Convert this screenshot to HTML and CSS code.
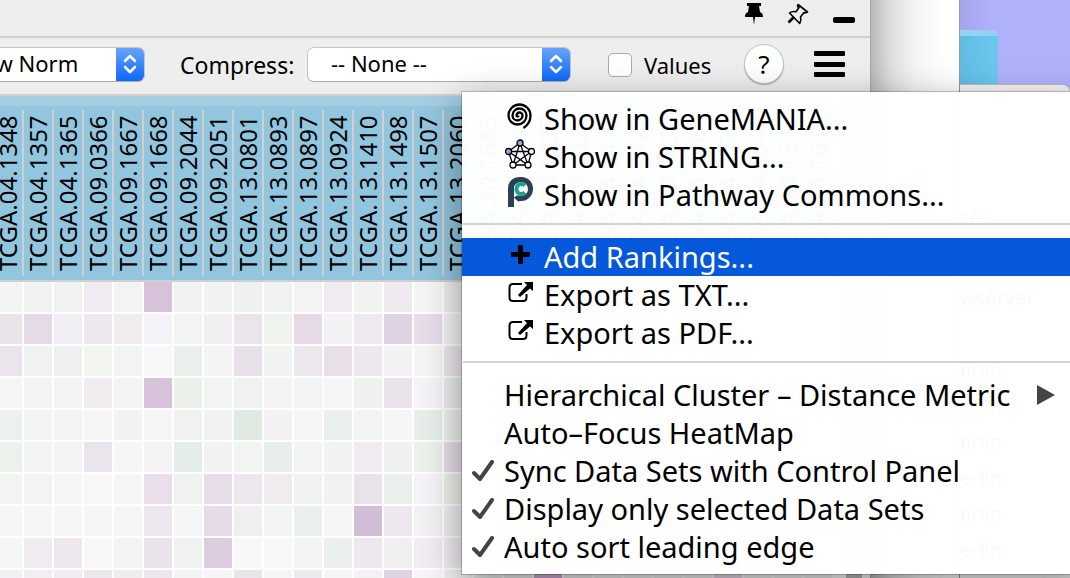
FILE: index.html
```html
<!DOCTYPE html>
<html lang="en">
<head>
<meta charset="utf-8">
<title>HeatMap</title>
<link rel="stylesheet" href="styles.css">
</head>
<body>
<div class="screen">
  <main class="panel">
    <header class="titlebar">
      <button class="icon-btn" aria-label="Pin"><svg width="18" height="22" viewBox="0 0 18 22"><path d="M2 0h14v3h-2l1 6c2 1 3 2 3 5h-8l-1 8-1-8H0c0-3 1-4 3-5l1-6H2z"/></svg></button>
      <button class="icon-btn" aria-label="Float"><svg width="22" height="22" viewBox="0 0 22 22" fill="none" stroke="#000" stroke-width="1.6" stroke-linejoin="round"><path d="M11 1.500l9.500 7.500-2.500 1-1-.5-3.500 4.500c.8 2.500.5 4.500-.8 6.500L2.500 10c2-1.600 4.200-1.800 6.500-1.200l3-4.300-1.500-1z"/><path d="M7 14l-5.500 5.500" stroke-width="2.600"/></svg></button>
      <button class="icon-btn" aria-label="Minimize"><svg width="22" height="22" viewBox="0 0 22 22"><rect y="14" width="22" height="6" rx="2"/></svg></button>
    </header>
    <div class="toolbar">
      <span class="drop drop-norm">
        <select aria-label="Normalization"><option>Row Norm</option></select>
        <svg class="chevrons" width="14" height="22" viewBox="0 0 14 22"><path d="M2 8l5-5 5 5M2 14l5 5 5-5"/></svg>
      </span>
      <label class="compress" for="compress">Compress:</label>
      <span class="drop drop-compress">
        <select id="compress"><option>-- None --</option></select>
        <svg class="chevrons" width="14" height="22" viewBox="0 0 14 22"><path d="M2 8l5-5 5 5M2 14l5 5 5-5"/></svg>
      </span>
      <label class="values"><input type="checkbox">Values</label>
      <div class="tools">
        <button class="help" aria-label="Help">?</button>
        <button class="icon-btn" aria-label="Options"><svg width="31" height="26" viewBox="0 0 31 26"><rect width="31" height="5" rx="1"/><rect y="11" width="31" height="5" rx="1"/><rect y="21" width="31" height="5" rx="1"/></svg></button>
      </div>
    </div>
    <div class="heat-area">
      <table class="heat"><thead><tr id="samples"></tr></thead><tbody id="cells"></tbody></table>
      <div class="track"></div>
    </div>
  </main>
  <div class="window-behind"></div>
  <aside class="desktop">
    <div class="folder"></div>
    <div class="finder">
      <span class="host first">ser</span>
      <span class="host second">wserver</span>
      <span class="host third">erlin</span>
      <span class="host">erlin</span><span class="host">erlin</span><span class="host">erlin</span><span class="host">erlin</span><span class="host">erlin</span>
    </div>
  </aside>

  <div class="menu" role="menu">
    <button class="item" role="menuitem"><span class="icon"><svg width="26" height="27" viewBox="0 0 26 27" fill="none" stroke="#000" stroke-width="2.300"><path d="M11.500 12.500a1 1 0 0 1-2 0a3 3 0 0 1 6 0a5 5 0 0 1-10 0a7 7 0 0 1 14 0a9 9 0 0 1-18 0a11 11 0 0 1 22 0c0 5.500-2.500 9.500-7 12.500"/></svg></span>Show in GeneMANIA...</button>
    <button class="item" role="menuitem"><span class="icon"><svg width="30" height="30" viewBox="0 0 30 30" fill="#fff" stroke="#000" stroke-width="1.300"><path fill="none" d="M15 4L3.500 12.500 8 26h15l3.500-13.500zM15 4L8 26l18.500-13.500h-23L23 26z"/><circle cx="15" cy="4" r="3" fill="#a0a4d8"/><circle cx="3.500" cy="12.500" r="3" fill="#a0a4d8"/><circle cx="26.500" cy="12.500" r="3"/><circle cx="8" cy="26" r="3"/><circle cx="23" cy="26" r="3"/></svg></span>Show in STRING...</button>
    <button class="item" role="menuitem"><span class="icon"><svg width="25" height="30" viewBox="0 0 25 30" fill="none"><path d="M3 30V11.500C3 6 6.500 3 12 3h1.500c5 0 8.500 4 8.500 9s-4 9-9 9c-2 0-3.500 0-5 1.500" stroke="#2d4055" stroke-width="6"/><circle cx="13" cy="12" r="7" fill="#fff"/><path d="M17 8.500a5 5 0 1 0 0 7" stroke="#17a689" stroke-width="4"/></svg></span>Show in Pathway Commons...</button>
    <hr>
    <button class="item active" role="menuitem"><span class="icon"><svg width="19" height="19" viewBox="0 0 19 19"><path d="M7 1q0-1 1-1h3q1 0 1 1v6h6q1 0 1 1v3q0 1-1 1h-6v6q0 1-1 1H8q-1 0-1-1v-6H1q-1 0-1-1V8q0-1 1-1h6z"/></svg></span>Add Rankings...</button>
    <button class="item" role="menuitem"><span class="icon"><svg width="25" height="22" viewBox="0 0 25 22"><path d="M14 3H5Q1.500 3 1.500 6.500v10Q1.500 20 5 20h10q3.500 0 3.500-3.500V13" fill="none" stroke="#000" stroke-width="2"/><path d="M16 1h9v9l-3-2.500-10 8.500-2-2L19 4z"/></svg></span>Export as TXT...</button>
    <button class="item" role="menuitem"><span class="icon"><svg width="25" height="22" viewBox="0 0 25 22"><path d="M14 3H5Q1.500 3 1.500 6.500v10Q1.500 20 5 20h10q3.500 0 3.500-3.500V13" fill="none" stroke="#000" stroke-width="2"/><path d="M16 1h9v9l-3-2.500-10 8.500-2-2L19 4z"/></svg></span>Export as PDF...</button>
    <hr>
    <button class="item" role="menuitem" aria-haspopup="true"><span class="check"></span>Hierarchical Cluster – Distance Metric<svg class="more" width="18" height="20" viewBox="0 0 18 20"><path d="M0 0l18 10L0 20z" fill="#444"/></svg></button>
    <button class="item" role="menuitem"><span class="check"></span>Auto–Focus HeatMap</button>
    <button class="item" role="menuitemcheckbox" aria-checked="true"><span class="check"><svg width="22" height="22" viewBox="0 0 22 22"><path d="M2 13l6 6L20 2"/></svg></span>Sync Data Sets with Control Panel</button>
    <button class="item" role="menuitemcheckbox" aria-checked="true"><span class="check"><svg width="22" height="22" viewBox="0 0 22 22"><path d="M2 13l6 6L20 2"/></svg></span>Display only selected Data Sets</button>
    <button class="item" role="menuitemcheckbox" aria-checked="true"><span class="check"><svg width="22" height="22" viewBox="0 0 22 22"><path d="M2 13l6 6L20 2"/></svg></span>Auto sort leading edge</button>
  </div>
</div>
<script src="heat.js"></script>
</body>
</html>
```
FILE: styles.css
```css
* { box-sizing: border-box; }
body { margin: 0; font-family: "Noto Sans", "Open Sans", sans-serif; font-size: 22px; color: #000; }
button, select { font: inherit; color: inherit; }
svg { display: block; flex: none; }
.screen { position: relative; display: flex; height: 100vh; overflow: hidden; background: #fff; }

.panel { flex: 1; min-width: 0; overflow: hidden; background: #eee; border-right: 1px solid #a6a6a6; }
.titlebar { display: flex; justify-content: flex-end; align-items: center; gap: 24px; height: 38px; padding: 0 15px 8px 0; border-bottom: 2px solid #d0d0d0; }
.icon-btn { padding: 0; border: 0; background: none; }
.toolbar { display: flex; align-items: center; height: 58px; padding-bottom: 4px; border-bottom: 2px solid #d0d0d0; }
.drop { position: relative; flex: none; display: flex; }
.drop select {
  appearance: none; width: 100%; height: 35px; padding: 0 32px 2px 23px; border: 1px solid #c4c4c4; border-bottom-color: #aaa; border-radius: 7px;
  background: linear-gradient(#6ba5fb, #0a66fd) right / 29px 100% no-repeat border-box #fff;
}
.drop-norm { width: 206px; margin-left: -61px; }
.drop-norm select { padding-left: 29px; }
.drop-compress { width: 264px; margin-left: 10px; }
.chevrons { position: absolute; right: 8px; top: 6px; fill: none; stroke: #fff; stroke-width: 2.500; stroke-linecap: round; stroke-linejoin: round; pointer-events: none; }
.compress { flex: none; width: 117px; margin-left: 35px; padding-top: 2px; font-size: 23px; white-space: nowrap; }
.values { display: flex; align-items: center; gap: 12px; margin-left: 37px; padding-top: 2px; }
.values input { appearance: none; width: 24px; height: 24px; margin: 0; border: 1px solid #aaa; border-radius: 5px; background: #fff; }
.tools { display: flex; align-items: center; gap: 30px; margin-left: auto; padding-right: 25px; }
.help { width: 40px; height: 40px; padding: 0; border: 1px solid #c4c4c4; border-radius: 50%; background: #fff; font-size: 26px; line-height: 36px; box-shadow: 0 1px 1px #aaa; }

.heat-area { display: flex; justify-content: space-between; background: #fff; }
.heat { flex: none; border-spacing: 0; table-layout: fixed; margin-left: -8px; }
.heat th { width: 30px; height: 186px; padding: 14px 0 4px; border-bottom: 2px solid #d0d0d0; background: linear-gradient(#a5cde2 10px, #92c5de 10px); font-size: 24px; font-weight: 400; vertical-align: bottom; }
.heat th span { display: block; width: 30px; height: 166px; border-right: 2px solid #d0d0d0; line-height: 28px; writing-mode: vertical-rl; transform: rotate(180deg); }
.heat td { width: 30px; height: 32px; padding: 0 0 2px 2px; }
.swatch { display: block; height: 30px; }
.track { width: 24px; border-right: 8px solid #fafafa; background: #bbb; }

.window-behind { width: 89px; border-right: 1px solid #999; background: linear-gradient(90deg, #b9b9b9, #dedede 20px, #f5f5f5 45px, #fff 75px); }
.desktop { display: flex; flex-direction: column; width: 110px; padding-top: 30px; background: linear-gradient(90deg, #a4a4ea, #b0b1fb 30px); }
.folder { width: 38px; height: 54px; border-top: 6px solid #92d3f2; border-top-right-radius: 6px; background: linear-gradient(90deg, #62bce2, #6cc8f0); }
.finder { flex: 1; border-top: 1px solid #bbb; border-top-right-radius: 8px; background: #f6f6f6; overflow: hidden; }
.host { display: block; height: 36px; font-size: 20px; line-height: 36px; }
.host.first { margin-top: 115px; }
.host.second { margin-top: 44px; }
.host.third { margin-top: 36px; }

.menu { position: absolute; left: 462px; right: -20px; top: 92px; padding: 8px 0; background: rgba(255, 255, 255, .98); box-shadow: 0 0 0 1px rgba(0, 0, 0, .2), 0 12px 36px rgba(0, 0, 0, .42); }
.menu hr { height: 2px; margin: 9px 0 13px 1px; border: 0; background: #d2d2d2; }
.item { display: flex; align-items: center; width: 100%; height: 38px; padding: 0; border: 0; background: none; font-size: 29px; line-height: 38px; text-align: left; white-space: nowrap; }
.item.active { background: #0558d9; color: #fff; }
.icon { display: flex; flex: none; justify-content: center; width: 48px; margin: 0 0 6px 34px; }
.check { flex: none; width: 32px; margin-left: 10px; }
.check path { fill: none; stroke: #444; stroke-width: 4; stroke-linecap: round; stroke-linejoin: round; }
.more { margin-left: 27px; }
```
FILE: heat.js
```js
const samples = ["04.1348", "04.1357", "04.1365", "09.0366", "09.1667", "09.1668", "09.2044", "09.2051", "13.0801", "13.0893", "13.0897", "13.0924", "13.1410", "13.1498", "13.1507", "13.2060", "20.1685", "23.1022", "23.1027", "23.1028", "24.1413", "24.1422", "24.1423", "24.1467", "24.1471", "24.1544", "24.1545", "24.1615"];
const rows = [
  "f3f5f5 f0f3f0 eff2f0 f0ebf0 f3f3f3 d6c2d9 f0f3ef f1f3f3 eef1f0 eff2f1 f3f3f3 f0ebf0 f0f3ef efeaef f5f5f5 eef1ee",
  "e9e3ea e5dbe8 f0eef2 ece8ee f1ecf0 f4f2f6 f1f4f2 f1eff2 eae4eb eef3ee e6dae7 f2f1f4 ede9ee dfd3e3 e8ddeb f4f4f4",
  "ebe4ec f0f2f1 eff1f0 f2f4f0 f2f4f3 f7f7f7 eaefeb f4f4f4 e8e1e9 f0f3f1 ece7ed e9dfe8 ece8ed f3f1f4 f5f5f5 efe9ef",
  "f5f5f5 f1f4f2 f2f4f3 f1ecf0 f4f4f7 d6c3d9 ebf0eb f1f4f2 f0f2f1 f4f4f4 f2f4f3 f5f5f7 edf2ed eae3eb f5f3f7 ecefed",
  "ecf0ef f3f5f4 f2f4f3 f5f5f5 f1f3f2 f6f6f6 f0f2f1 f1f3f2 e0eae2 f3f1f4 f5f5f5 eaefeb f3f5f4 f6f6f6 e8efea eff3f0",
  "ecf1ec f3f5f4 f2f4f3 eae5ec f6f6f6 f5f3f6 e4ede7 f3f1f4 f2f4f1 e7eeea f2f4f3 f1f3f2 f0ebf0 eff1f0 ecf1ec e9dfeb",
  "f2f4f3 f3f3f3 f6f6f6 f7f7f7 f5f5f5 e9deea f0f2f1 e7dde9 ece7ed f0ebef f1f3f2 f2f0f3 e9e2ea ebefeb f5f3f7 eef2ed",
  "f6f6f6 f6f6f6 f6f6f6 f6f6f6 f4f6f5 eee8ee f6f6f6 e6dbe8 f0eef1 f3f5f4 ebf0ec f6f6f6 d1bdd6 ede8ee f3f1f4 f3f0f4",
  "f5f7f6 f0ebf1 eee8ee f7f7f7 f4f4f4 ebe3ea f0f2f1 dccde0 f7f7f7 f7f7f7 f1f4f2 ebf0ec ede8ed f0eef1 f2edf3 f2eef3",
  "f2f0f4 f2edf0 f0ecf1 ece7ed f0ecef ebe7ed f4f4f7 f6f6f6 eae4eb f5f5f5 eeebf0 f6f6f6 f2f1f4 dfd2e2 f6f6f6 f2f2f2 eef3ee f0f2f1 cfabd4 f2f0f3 f4f4f4 f4f4f4 f2f4f3 f4f4f4 e8dbea"
].map(row => row.split(" "));

document.getElementById("samples").innerHTML = samples.map(s => `<th scope="col"><span>TCGA.${s}</span></th>`).join("");
document.getElementById("cells").innerHTML = rows.map(row =>
  `<tr>${samples.map((s, i) => `<td><span class="swatch" style="background:#${row[i] || "f4f4f4"}"></span></td>`).join("")}</tr>`
).join("");
```
